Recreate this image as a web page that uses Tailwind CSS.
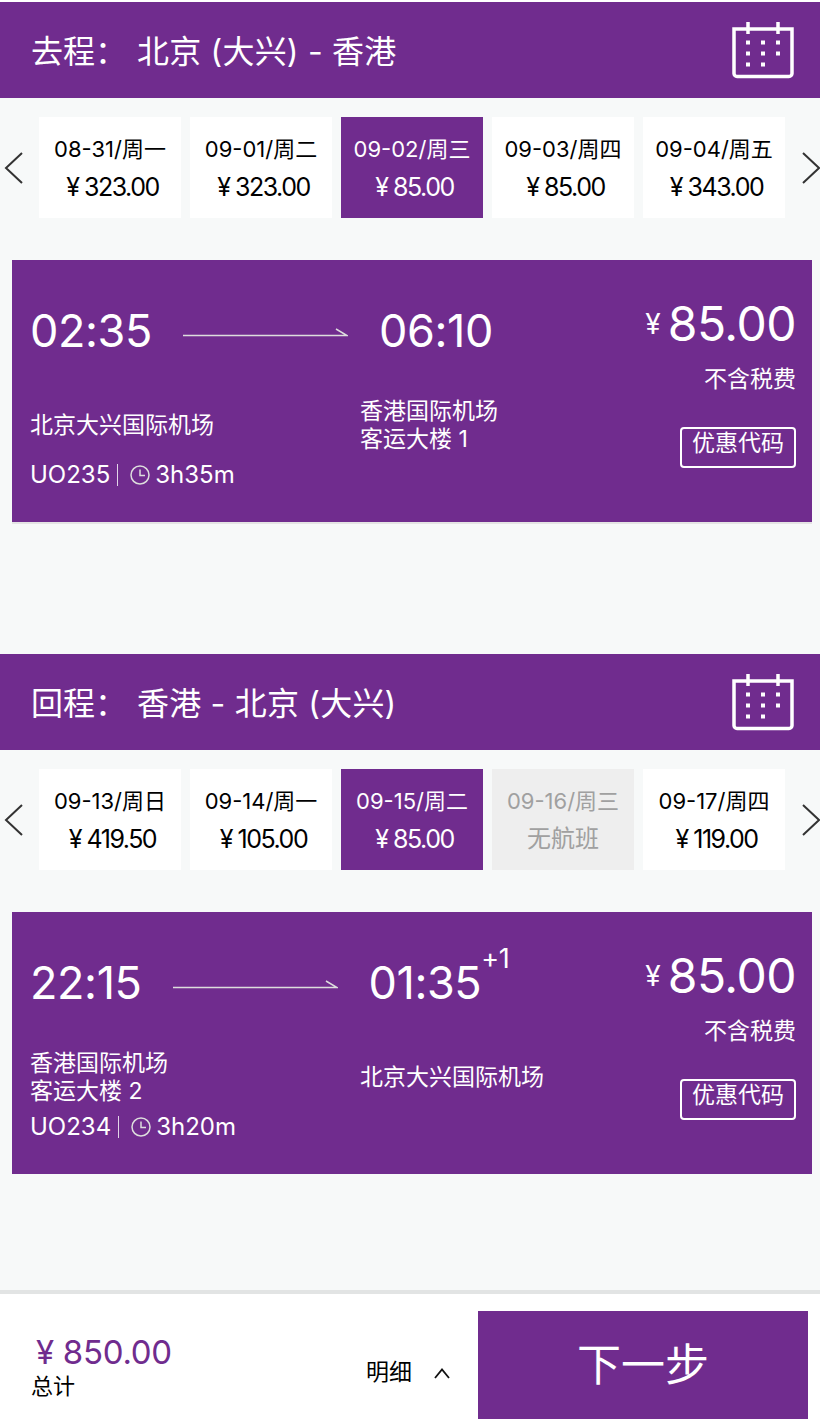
<!DOCTYPE html>
<html lang="zh">
<head>
  <meta charset="utf-8"/>
  <meta content="width=device-width, initial-scale=1.0" name="viewport"/>
  <title>选择航班</title>
  <script src="https://cdn.jsdelivr.net/npm/@tailwindcss/browser@4"></script>
</head>
<body class="bg-[#f7f9f9] font-['Inter','Noto_Sans_CJK_SC',sans-serif] w-[820px] h-[1424px] overflow-hidden flex flex-col">
  <div class="bg-white h-[2px]"></div>

  <!-- 去程 -->
  <section class="h-[652px]">
    <div class="h-[96px] bg-[#702c8e] text-white pl-[31px] pr-[26px] flex items-center justify-between">
      <h2 class="text-[32px] leading-none flex pt-[4px]"><span class="w-[106px]">去程：</span><span class="tracking-[0.2px]">北京 (大兴) - 香港</span></h2>
      <svg class="w-[62px] h-[58px]" viewBox="0 0 62 58" fill="none" stroke="white">
        <path d="M2 8H60V52.500a3 3 0 0 1-3 3H5a3 3 0 0 1-3-3Z" stroke-width="3.500"/>
        <path d="M16 1V13M46 1V13" stroke-width="3.500"/>
        <path d="M14 21.500h4M29 21.500h4M44 21.500h4M14 32.500h4M29 32.500h4M44 32.500h4M14 43.500h4M29 43.500h4" stroke-width="4"/>
      </svg>
    </div>
    <div class="flex items-center mt-[19px] h-[101px]">
      <svg class="w-[39px] h-[36px] shrink-0" viewBox="0 0 39 36" fill="none" stroke="#333" stroke-width="2"><path d="M22 3L6 18L22 33"/></svg>
      <div class="flex gap-[9px]">
        <div class="w-[142px] h-[101px] bg-white text-black flex flex-col items-center"><span class="text-[22px] leading-none mt-[21px]">08-31/周一</span><span class="text-[25px] leading-none mt-[15px] pl-[5px] tracking-[-1.5px]">¥ 323.00</span></div>
        <div class="w-[142px] h-[101px] bg-white text-black flex flex-col items-center"><span class="text-[22px] leading-none mt-[21px]">09-01/周二</span><span class="text-[25px] leading-none mt-[15px] pl-[5px] tracking-[-1.5px]">¥ 323.00</span></div>
        <div class="w-[142px] h-[101px] bg-[#702c8e] text-white flex flex-col items-center"><span class="text-[22px] leading-none mt-[21px]">09-02/周三</span><span class="text-[25px] leading-none mt-[15px] pl-[5px] tracking-[-1.5px]">¥ 85.00</span></div>
        <div class="w-[142px] h-[101px] bg-white text-black flex flex-col items-center"><span class="text-[22px] leading-none mt-[21px]">09-03/周四</span><span class="text-[25px] leading-none mt-[15px] pl-[5px] tracking-[-1.5px]">¥ 85.00</span></div>
        <div class="w-[142px] h-[101px] bg-white text-black flex flex-col items-center"><span class="text-[22px] leading-none mt-[21px]">09-04/周五</span><span class="text-[25px] leading-none mt-[15px] pl-[5px] tracking-[-1.5px]">¥ 343.00</span></div>
      </div>
      <svg class="w-[35px] h-[36px] shrink-0" viewBox="0 0 35 36" fill="none" stroke="#333" stroke-width="2"><path d="M18 3L34 18L18 33"/></svg>
    </div>
    <div class="mx-[12px] mt-[42px] w-[800px] h-[264px] bg-[#702c8e] text-white pl-[18px] pr-[16px] flex justify-between border-b-2 border-[#e4e4e4]">
      <div class="flex flex-col">
        <div class="flex items-center h-[60px] mt-[40px]">
          <span class="text-[45px] leading-none tracking-[-0.4px]">02:35</span>
          <svg class="w-[165px] h-[12px] mx-[31px] mt-[4px]" viewBox="0 0 165 12" fill="none" stroke="#ddd" stroke-width="1.500"><path d="M0 9.500H164L153 3"/></svg>
          <span class="text-[45px] leading-none tracking-[-0.4px]">06:10</span>
        </div>
        <div class="flex mt-[37px] h-[56px] text-[23px] leading-[28px]">
          <div class="w-[330px] flex items-center">北京大兴国际机场</div>
          <div class="flex items-center">香港国际机场<br/>客运大楼 1</div>
        </div>
        <div class="flex items-center h-[30px] mt-[7px] text-[24px] leading-none">
          <span>UO235</span><span class="w-px h-[22px] bg-white/80 ml-[7px] mr-[4px]"></span>
          <svg class="w-[20px] h-[20px] ml-[8px]" viewBox="0 0 20 20" fill="none" stroke="#ddd" stroke-width="1.500"><circle cx="10" cy="10" r="9"/><path d="M10 4.500V10.500H15"/></svg>
          <span class="ml-[5px]">3h35m</span>
        </div>
      </div>
      <div class="flex flex-col items-end">
        <div class="flex items-center h-[60px] mt-[34px]"><span class="text-[28px] leading-none mr-[7px]">¥</span><span class="text-[48px] leading-none tracking-[-0.5px]">85.00</span></div>
        <span class="text-[23px] leading-[28px] mt-[11px]">不含税费</span>
        <span class="w-[116px] h-[41px] mt-[34px] pb-[8px] border-2 border-white rounded-[4px] text-[23px] leading-none flex items-center justify-center">优惠代码</span>
      </div>
    </div>
  </section>

  <!-- 回程 -->
  <section class="h-[636px]">
    <div class="h-[96px] bg-[#702c8e] text-white pl-[31px] pr-[26px] flex items-center justify-between">
      <h2 class="text-[32px] leading-none flex pt-[4px]"><span class="w-[106px]">回程：</span><span class="tracking-[0.2px]">香港 - 北京 (大兴)</span></h2>
      <svg class="w-[62px] h-[58px]" viewBox="0 0 62 58" fill="none" stroke="white">
        <path d="M2 8H60V52.500a3 3 0 0 1-3 3H5a3 3 0 0 1-3-3Z" stroke-width="3.500"/>
        <path d="M16 1V13M46 1V13" stroke-width="3.500"/>
        <path d="M14 21.500h4M29 21.500h4M44 21.500h4M14 32.500h4M29 32.500h4M44 32.500h4M14 43.500h4M29 43.500h4" stroke-width="4"/>
      </svg>
    </div>
    <div class="flex items-center mt-[19px] h-[101px]">
      <svg class="w-[39px] h-[36px] shrink-0" viewBox="0 0 39 36" fill="none" stroke="#333" stroke-width="2"><path d="M22 3L6 18L22 33"/></svg>
      <div class="flex gap-[9px]">
        <div class="w-[142px] h-[101px] bg-white text-black flex flex-col items-center"><span class="text-[22px] leading-none mt-[21px]">09-13/周日</span><span class="text-[25px] leading-none mt-[15px] pl-[5px] tracking-[-1.5px]">¥ 419.50</span></div>
        <div class="w-[142px] h-[101px] bg-white text-black flex flex-col items-center"><span class="text-[22px] leading-none mt-[21px]">09-14/周一</span><span class="text-[25px] leading-none mt-[15px] pl-[5px] tracking-[-1.5px]">¥ 105.00</span></div>
        <div class="w-[142px] h-[101px] bg-[#702c8e] text-white flex flex-col items-center"><span class="text-[22px] leading-none mt-[21px]">09-15/周二</span><span class="text-[25px] leading-none mt-[15px] pl-[5px] tracking-[-1.5px]">¥ 85.00</span></div>
        <div class="w-[142px] h-[101px] bg-[#eeeeee] text-[#a0a0a0] flex flex-col items-center"><span class="text-[22px] leading-none mt-[21px]">09-16/周三</span><span class="text-[24px] leading-none mt-[15px]">无航班</span></div>
        <div class="w-[142px] h-[101px] bg-white text-black flex flex-col items-center"><span class="text-[22px] leading-none mt-[21px]">09-17/周四</span><span class="text-[25px] leading-none mt-[15px] pl-[5px] tracking-[-1.5px]">¥ 119.00</span></div>
      </div>
      <svg class="w-[35px] h-[36px] shrink-0" viewBox="0 0 35 36" fill="none" stroke="#333" stroke-width="2"><path d="M18 3L34 18L18 33"/></svg>
    </div>
    <div class="mx-[12px] mt-[42px] w-[800px] h-[262px] bg-[#702c8e] text-white pl-[18px] pr-[16px] flex justify-between">
      <div class="flex flex-col">
        <div class="flex items-center h-[60px] mt-[40px]">
          <span class="text-[45px] leading-none tracking-[-0.4px]">22:15</span>
          <svg class="w-[165px] h-[12px] mx-[31px] mt-[4px]" viewBox="0 0 165 12" fill="none" stroke="#ddd" stroke-width="1.500"><path d="M0 9.500H164L153 3"/></svg>
          <span class="text-[45px] leading-none tracking-[-0.4px] relative">01:35<span class="absolute left-full -top-[15px] text-[27px] leading-none">+1</span></span>
        </div>
        <div class="flex mt-[37px] h-[56px] text-[23px] leading-[28px]">
          <div class="w-[330px] flex items-center">香港国际机场<br/>客运大楼 2</div>
          <div class="flex items-center">北京大兴国际机场</div>
        </div>
        <div class="flex items-center h-[30px] mt-[7px] text-[24px] leading-none">
          <span>UO234</span><span class="w-px h-[22px] bg-white/80 ml-[7px] mr-[4px]"></span>
          <svg class="w-[20px] h-[20px] ml-[8px]" viewBox="0 0 20 20" fill="none" stroke="#ddd" stroke-width="1.500"><circle cx="10" cy="10" r="9"/><path d="M10 4.500V10.500H15"/></svg>
          <span class="ml-[5px]">3h20m</span>
        </div>
      </div>
      <div class="flex flex-col items-end">
        <div class="flex items-center h-[60px] mt-[34px]"><span class="text-[28px] leading-none mr-[7px]">¥</span><span class="text-[48px] leading-none tracking-[-0.5px]">85.00</span></div>
        <span class="text-[23px] leading-[28px] mt-[11px]">不含税费</span>
        <span class="w-[116px] h-[41px] mt-[34px] pb-[8px] border-2 border-white rounded-[4px] text-[23px] leading-none flex items-center justify-center">优惠代码</span>
      </div>
    </div>
  </section>

  <!-- 底部 -->
  <footer class="h-[134px] bg-white border-t-4 border-[#e2e4e4] pl-[31px] pr-[12px] pt-[17px] flex items-start justify-between">
    <div class="flex items-start">
      <div class="w-[335px] flex flex-col mt-[25px]">
        <span class="text-[33px] leading-none text-[#702c8e] ml-[5px] tracking-[-0.3px]">¥ 850.00</span>
        <span class="text-[22px] leading-none text-black mt-[6px]">总计</span>
      </div>
      <div class="flex items-center mt-[50px]">
        <span class="text-[23px] text-black leading-none">明细</span>
        <svg class="w-[18px] h-[14px] ml-[21px]" viewBox="0 0 18 14" fill="none" stroke="#111" stroke-width="1.800"><path d="M2 12L9 3.500L16 12"/></svg>
      </div>
    </div>
    <button class="w-[330px] h-[108px] bg-[#702c8e] text-white text-[44px] leading-none" type="button">下一步</button>
  </footer>
</body>
</html>
